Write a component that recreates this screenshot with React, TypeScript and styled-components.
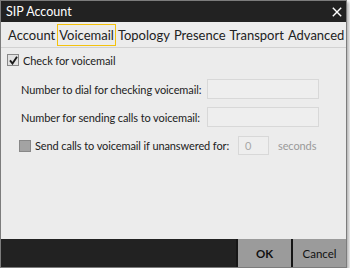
import React from "react";
import styled, { createGlobalStyle } from "styled-components";

const GlobalStyle = createGlobalStyle`
  html, body {
    margin: 0;
    padding: 0;
    background: #ffffff;
  }
  body {
    font-family: Lato, "Noto Sans", sans-serif;
  }
`;

const Window = styled.div`
  box-sizing: border-box;
  width: 347px;
  height: 268px;
  border: 1px solid #7c7c7c;
  background: #ececec;
  display: flex;
  flex-direction: column;
  box-shadow: 2px 2px 3px rgba(0, 0, 0, 0.3);
`;

const TitleBar = styled.div`
  height: 21px;
  flex-shrink: 0;
  background: #222222;
  color: #ffffff;
  display: flex;
  align-items: center;
  justify-content: space-between;
  padding: 0 4px 0 5px;
  font-size: 12.5px;
`;

const CloseIcon = styled.svg`
  width: 10px;
  height: 10px;
`;

const Tabs = styled.div`
  display: flex;
  align-items: center;
  height: 25px;
  flex-shrink: 0;
  padding: 0 0 0 5px;
  border-bottom: 1px solid #d2d2d2;
`;

const Tab = styled.div<{ $active?: boolean }>`
  font-size: 13px;
  color: #222;
  padding: 0 1px;
  height: 20px;
  line-height: 20px;
  border: 1px solid ${(p) => (p.$active ? "#f4c20d" : "transparent")};
`;

const Body = styled.div`
  flex: 1;
  padding: 5px 6px 0 6px;
  display: flex;
  flex-direction: column;
  font-size: 11px;
  letter-spacing: -0.1px;
  color: #222;
`;

const CheckRow = styled.label<{ $indent?: number; $top?: number; $h?: number }>`
  display: flex;
  align-items: center;
  gap: 4px;
  margin-left: ${(p) => p.$indent ?? 0}px;
  margin-top: ${(p) => p.$top ?? 0}px;
  height: ${(p) => p.$h ?? 14}px;
`;

const Box = styled.span<{ $disabled?: boolean }>`
  flex-shrink: 0;
  box-sizing: border-box;
  width: 12px;
  height: 12px;
  border: 1px solid #888888;
  background: ${(p) => (p.$disabled ? "#a3a3a3" : "#e2e2e2")};
  display: flex;
  align-items: center;
  justify-content: center;
`;

const FieldRow = styled.div<{ $top?: number }>`
  display: flex;
  align-items: center;
  margin-left: 14px;
  margin-top: ${(p) => p.$top ?? 0}px;
`;

const Label = styled.span<{ $muted?: boolean; $w?: number }>`
  color: ${(p) => (p.$muted ? "#9a9a9a" : "#222")};
  white-space: nowrap;
  flex-shrink: 0;
  ${(p) => (p.$w ? `width: ${p.$w}px;` : "")}
`;

const Input = styled.div<{ $w: number; $h?: number }>`
  flex-shrink: 0;
  width: ${(p) => p.$w}px;
  height: ${(p) => p.$h ?? 19}px;
  border: 1px solid #d8d8d8;
  background: #eeeeee;
  box-sizing: border-box;
  color: #a8a8a8;
  padding-left: 6px;
  display: flex;
  align-items: center;
`;

const Footer = styled.div`
  height: 28px;
  flex-shrink: 0;
  background: #222222;
  display: flex;
  justify-content: flex-end;
`;

const Button = styled.button<{ $bold?: boolean }>`
  box-sizing: border-box;
  width: 55px;
  height: 100%;
  background: #9b9b9b;
  border: none;
  border-left: 2px solid #161616;
  font-family: Lato, sans-serif;
  font-size: 11.5px;
  font-weight: ${(p) => (p.$bold ? 700 : 400)};
  color: #111;
  padding: 0;
`;

const Seconds = styled(Label)`
  margin-left: 5px;
`;

export default function App() {
  return (
    <>
      <GlobalStyle />
      <Window>
        <TitleBar>
          <span>SIP Account</span>
          <CloseIcon viewBox="0 0 10 10">
            <path d="M0.8 0.8 L9.2 9.2 M9.2 0.8 L0.8 9.2" stroke="#fff" strokeWidth="1.4" />
          </CloseIcon>
        </TitleBar>
        <Tabs>
          <Tab>Account</Tab>
          <Tab $active>Voicemail</Tab>
          <Tab>Topology</Tab>
          <Tab>Presence</Tab>
          <Tab>Transport</Tab>
          <Tab>Advanced</Tab>
        </Tabs>
        <Body>
          <CheckRow>
            <Box>
              <svg width="9" height="9" viewBox="0 0 9 9">
                <path d="M1 4.3 L3.5 7.5 L8 0.8" stroke="#1a1a1a" strokeWidth="1.9" fill="none" />
              </svg>
            </Box>
            <Label>Check for voicemail</Label>
          </CheckRow>
          <FieldRow $top={12}>
            <Label $w={186}>Number to dial for checking voicemail:</Label>
            <Input $w={112} $h={20} />
          </FieldRow>
          <FieldRow $top={8}>
            <Label $w={186}>Number for sending calls to voicemail:</Label>
            <Input $w={112} $h={20} />
          </FieldRow>
          <CheckRow $indent={12} $top={9} $h={19}>
            <Box $disabled />
            <Label $w={199}>Send calls to voicemail if unanswered for:</Label>
            <Input $w={31}>0</Input>
            <Seconds $muted>seconds</Seconds>
          </CheckRow>
        </Body>
        <Footer>
          <Button $bold>OK</Button>
          <Button>Cancel</Button>
        </Footer>
      </Window>
    </>
  );
}
